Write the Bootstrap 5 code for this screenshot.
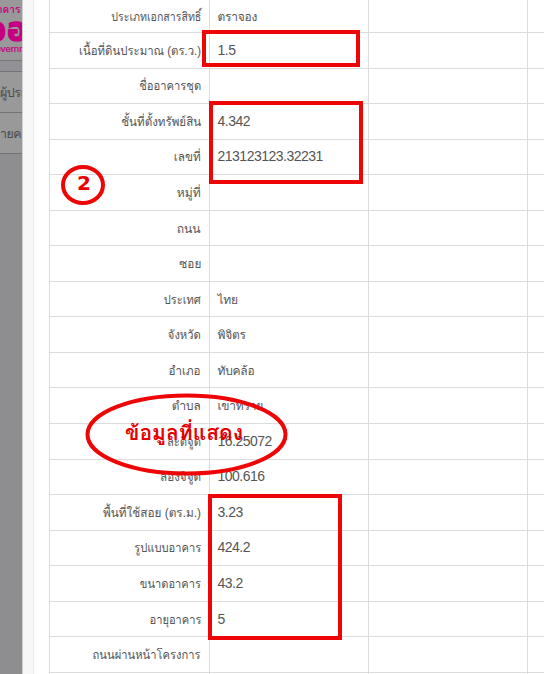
<!DOCTYPE html>
<html lang="th">
<head>
<meta charset="utf-8">
<meta name="viewport" content="width=device-width, initial-scale=1">
<title>ข้อมูลที่แสดง</title>
<link href="https://cdn.jsdelivr.net/npm/bootstrap@5.3.0/dist/css/bootstrap.min.css" rel="stylesheet">
<style>
body{width:544px;height:674px;overflow:hidden;background:#fff;color:#555;font:14px/20px "Liberation Sans",Loma,Garuda,Waree,sans-serif}
.viewport-box{height:674px}
.backdrop-page{width:22px;height:674px;background:#8e8e90;color:#4b4b4b;white-space:nowrap}
.brand-strip{height:61px;background:#999;border-bottom:1px solid #77777a}
.brand-strip svg{display:block}
.strip-gap{height:10px;background:#929296}
.strip-item{height:41px;background:#999;border-top:1px solid #737376;line-height:42px;font-size:12.5px;letter-spacing:-.5px}
.strip-end{border-top:1px solid #737376}
.gutter{width:12px;background:#f7f7f7;border-left:1px solid #cfcfcf;border-right:1px solid #e9e9e9}
.sheet{margin-left:15px;width:495px;border-left:1px solid #dcdcdc}
.field-row{height:35.56px;border-bottom:1px solid #dcdcdc}
.field-row:first-child{height:33px}
.field-row>div{border-right:1px solid #dcdcdc;white-space:nowrap}
.f-label{width:160px;padding:1px 8px 0 0;font-size:12.5px}
.f-label span{display:inline-block;transform-origin:right}
.f-value{width:159px;padding-left:7.500px;letter-spacing:-.5px;padding-bottom:1px}
.f-thai{font-size:12px;letter-spacing:-.25px;padding-bottom:0;padding-top:1px}
.mark-layer{left:0;top:0;pointer-events:none}
</style>
</head>
<body class="position-relative">
<div class="viewport-box d-flex overflow-hidden">
<aside class="backdrop-page overflow-hidden flex-shrink-0">
<div class="brand-strip"><svg width="22" height="60" fill="#c40080"><text x="-3" y="13" font-size="10" font-weight="bold">าคาร</text><text x="-14 7" y="41" font-size="34" font-weight="bold" font-family="Noto Sans Thai,sans-serif" stroke="#c40080" stroke-width="1.500">ออ</text><text x="-12" y="52" font-size="9.500" stroke="#c40080" stroke-width=".2">Government</text></svg></div>
<div class="strip-gap"></div>
<div class="strip-item">ผู้ประ</div>
<div class="strip-item">ายค</div>
<div class="strip-end"></div>
</aside>
<div class="gutter flex-shrink-0"></div>
<main class="sheet flex-shrink-0" id="fields"></main>
</div>
<svg class="mark-layer position-absolute" width="544" height="674" fill="none" stroke="#ee0505" stroke-width="4">
<rect x="204" y="32" width="154" height="33"/>
<rect x="211" y="103" width="150" height="79"/>
<rect x="210" y="496" width="130" height="142"/>
<ellipse cx="83" cy="185" rx="20" ry="18"/>
<ellipse cx="186.500" cy="434.500" rx="99" ry="39"/>
<g fill="#e60000" stroke="none" font-weight="bold"><text x="77" y="190" font-size="20" font-family="DejaVu Sans">2</text><text x="125" y="440" font-size="20" font-family="DejaVu Sans,Loma,Garuda,Waree,sans-serif" textLength="118" lengthAdjust="spacingAndGlyphs">ข้อมูลที่แสดง</text></g>
</svg>
<script>
// label, value, label width in px
const fields=[["ประเภทเอกสารสิทธิ์","ตราจอง",90],["เนื้อที่ดินประมาณ (ตร.ว.)","1.5",122],["ชื่ออาคารชุด","",62],["ชั้นที่ตั้งทรัพย์สิน","4.342",80],["เลขที่","213123123.32231",27],["หมู่ที่","",24],["ถนน","",24],["ซอย","",22],["ประเทศ","ไทย",37],["จังหวัด","พิจิตร",33],["อำเภอ","ทับคล้อ",32],["ตำบล","เขาทราย",29],["ละติจูด","16.25072",34],["ลองจิจูด","100.616",41],["พื้นที่ใช้สอย (ตร.ม.)","3.23",98],["รูปแบบอาคาร","424.2",67],["ขนาดอาคาร","43.2",61],["อายุอาคาร","5",52],["ถนนผ่านหน้าโครงการ","",108],["","",0]];
const sheet=document.getElementById("fields");
sheet.innerHTML=fields.map(([k,v])=>`<div class="field-row d-flex"><div class="f-label d-flex align-items-center justify-content-end"><span>${k}</span></div><div class="f-value d-flex align-items-center ${/[ก-๙]/.test(v)?"f-thai":""}"><span>${v}</span></div><div class="f-value"></div></div>`).join("");
sheet.querySelectorAll(".f-label span").forEach((s,i)=>{if(s.offsetWidth)s.style.transform=`scaleX(${fields[i][2]/s.getBoundingClientRect().width})`});
</script>
<script src="https://cdn.jsdelivr.net/npm/bootstrap@5.3.0/dist/js/bootstrap.bundle.min.js"></script>
</body>
</html>
